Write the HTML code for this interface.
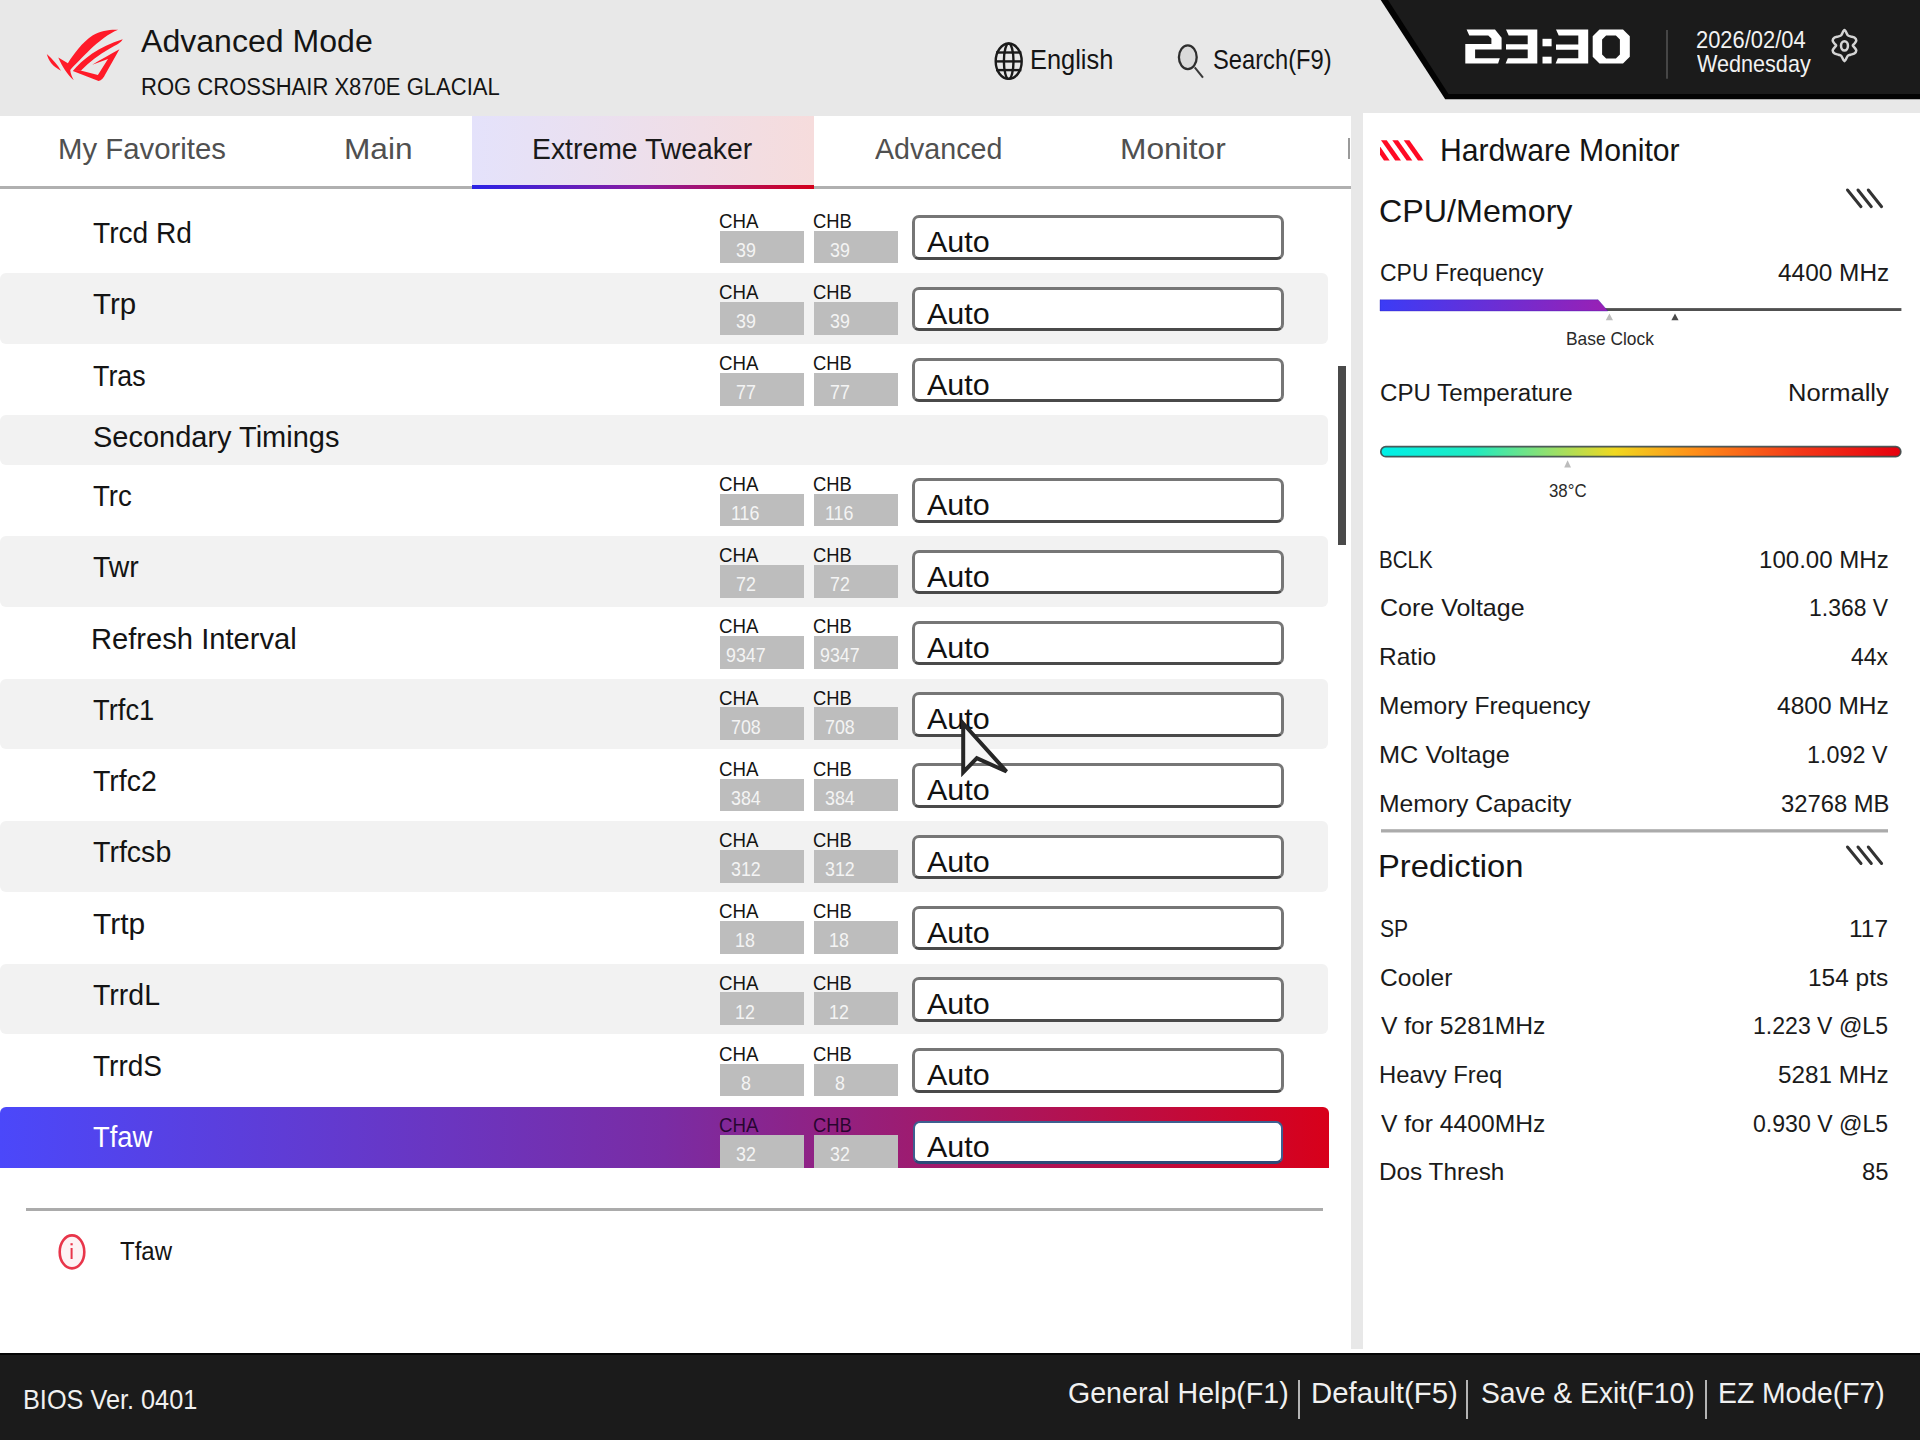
<!DOCTYPE html>
<html><head><meta charset="utf-8">
<style>
html,body{margin:0;padding:0}
body{width:1920px;height:1440px;overflow:hidden;position:relative;background:#e8e8e8;font-family:"Liberation Sans",sans-serif}
.a{position:absolute}
.t{position:absolute;white-space:pre;transform-origin:0 0;font-family:"Liberation Sans",sans-serif}
.rbg{position:absolute;left:0;width:1328px;background:#f2f2f2;border-radius:6px}
.hl{position:absolute;left:0;width:1329px;background:linear-gradient(90deg,#4b48fa 0%,#7a2ca4 50%,#d8001a 100%);border-radius:6px 6px 0 0}
.gb{position:absolute;width:83.5px;background:#bdbdbd}
.ib{position:absolute;left:911.5px;width:372.9px;height:44.7px;box-sizing:border-box;border:3px solid #767676;border-bottom:3.3px solid #4a4a4a;border-radius:7px;background:#fff}
.ibh{position:absolute;left:912.5px;width:370.5px;height:43.5px;box-sizing:border-box;border:2px solid #3d5f90;border-bottom:3px solid #2c4a78;border-radius:7px;background:#fff}
</style></head><body>
<!-- panels -->
<div class="a" style="left:0;top:115.5px;width:1350.5px;height:1233.5px;background:#fff"></div>
<div class="a" style="left:1363px;top:113.3px;width:557px;height:1235.7px;background:#fff"></div>
<div class="a" style="left:0;top:1349px;width:1920px;height:4px;background:#fff"></div>
<!-- footer -->
<div class="a" style="left:0;top:1352.5px;width:1920px;height:87.5px;background:#1b1b1b;border-top:2.5px solid #050505;box-sizing:border-box"></div>
<div class="a" style="left:1297.5px;top:1380.4px;width:2px;height:38.6px;background:#b4b4b4"></div>
<div class="a" style="left:1466.2px;top:1380.4px;width:2px;height:38.6px;background:#b4b4b4"></div>
<div class="a" style="left:1704.5px;top:1380.4px;width:2px;height:38.6px;background:#b4b4b4"></div>
<!-- clock panel -->
<svg class="a" style="left:0;top:0" width="1920" height="110" viewBox="0 0 1920 110">
<polygon points="1380.7,0 1920,0 1920,99.3 1445.2,99.3" fill="#030303"/>
<polygon points="1388,0 1920,0 1920,94 1448.5,94" fill="#1b1b1b"/>
<line x1="1667" y1="30" x2="1667" y2="78.8" stroke="#464646" stroke-width="2"/>
<g fill="#fff">
<polygon points="1466.6,29.5 1495,29.5 1501.6,37.7 1501.6,49.4 1475.1,49.4 1475.1,58.3 1499.8,58.3 1498.1,63.5 1465.3,63.5 1465.3,44.1 1491.4,44.1 1491.4,38.6 1488.3,35.6 1469.3,35.6"/>
<polygon points="1506,29.5 1537.3,29.5 1537.3,63.5 1505.6,63.5 1507.8,58.3 1527.7,58.3 1527.7,49.5 1506,49.5 1506,44.2 1527.7,44.2 1527.7,35.6 1508.7,35.6"/>
<rect x="1542.5" y="38.8" width="9.1" height="7.5"/>
<rect x="1542.5" y="56.7" width="9.1" height="6.8"/>
<polygon points="1556,29.5 1588.2,29.5 1588.2,63.5 1555.6,63.5 1557.8,58.2 1578.3,58.2 1578.3,49.7 1556,49.7 1556,44.5 1578.3,44.5 1578.3,35.5 1558.7,35.5"/>
<path fill-rule="evenodd" d="M1599.5,29.5 L1623,29.5 L1629.8,36.3 L1629.8,56.7 L1623,63.5 L1599.5,63.5 L1592.7,56.7 L1592.7,36.3 Z M1606.1,35.4 L1615.9,35.4 L1619.9,39.4 L1619.9,54.6 L1615.9,58.6 L1606.1,58.6 L1602.1,54.6 L1602.1,39.4 Z"/>
</g>
<!-- gear -->
<g transform="translate(1820,20) scale(0.034722)" fill="none" stroke="#d4d4d4" stroke-width="72" stroke-linejoin="round">
<path d="M705,285 C737,285 772,409 800,440 C828,471 843,459 875,470 C907,481 962,485 990,505 C1018,525 1045,561 1045,590 C1045,619 1007,656 990,680 C973,704 945,717 945,735 C945,753 973,766 990,790 C1007,814 1045,851 1045,880 C1045,909 1018,945 990,965 C962,985 907,989 875,1000 C843,1011 828,999 800,1030 C772,1061 737,1185 705,1185 C673,1185 638,1061 610,1030 C582,999 567,1011 535,1000 C503,989 448,985 420,965 C392,945 365,909 365,880 C365,851 403,814 420,790 C437,766 465,753 465,735 C465,717 437,704 420,680 C403,656 365,619 365,590 C365,561 392,525 420,505 C448,485 503,481 535,470 C567,459 582,471 610,440 C638,409 673,285 705,285 Z"/>
<ellipse cx="705" cy="745" rx="100" ry="135"/>
</g>
<!-- globe -->
<g fill="none" stroke="#1a1a1a" stroke-width="2.4">
<ellipse cx="1008.7" cy="61.2" rx="13" ry="17.7"/>
<ellipse cx="1008.7" cy="61.2" rx="4.8" ry="17.7"/>
<line x1="996" y1="52.5" x2="1021.4" y2="52.5"/>
<line x1="995.7" y1="61.4" x2="1021.7" y2="61.4"/>
<line x1="996" y1="70.1" x2="1021.4" y2="70.1"/>
</g>
<!-- search -->
<ellipse cx="1187.8" cy="57.25" rx="8.9" ry="11.8" fill="#dadada" stroke="#2e2e2e" stroke-width="2.3"/>
<line x1="1194.7" y1="67.3" x2="1203" y2="77.7" stroke="#3a3a3a" stroke-width="2"/>
<!-- ROG logo -->
<g transform="translate(40,24) scale(0.046875)" fill="#ff1a28">
<path d="M145,640 C185,790 270,910 448,995 C380,880 280,760 145,640 Z"/>
<path d="M390,715 L595,835 C720,640 900,390 1120,245 C1300,145 1500,115 1665,125 C1470,205 1270,360 1070,545 C900,710 750,870 645,980 C650,1060 690,1140 720,1200 C580,1080 470,900 390,715 Z"/>
<path d="M700,1005 C900,760 1250,480 1765,325 C1730,400 1620,450 1490,520 C1260,650 1060,800 870,995 Z"/>
<path fill-rule="evenodd" d="M700,1005 L1250,1218 C1310,1205 1360,1150 1400,1060 L1695,540 C1500,650 1300,760 1115,870 L1450,745 L1235,1088 L865,990 Z"/>
</g>
</svg>
<!-- tabs -->
<div class="a" style="left:472px;top:115.5px;width:342px;height:70px;background:linear-gradient(90deg,#e4e2fb,#f6dcdc)"></div>
<div class="a" style="left:0;top:185.5px;width:1350.5px;height:3px;background:#b0b0b0"></div>
<div class="a" style="left:472px;top:184.7px;width:342px;height:4px;background:linear-gradient(90deg,#2a22e6,#8a1ca0 50%,#d4001a)"></div>
<div class="a" style="left:1347.8px;top:138px;width:2.2px;height:20.7px;background:#9a9a9a"></div>
<!-- rows -->
<div class="gb" style="left:720.2px;top:230.70px;height:32.80px"></div>
<div class="gb" style="left:814.2px;top:230.70px;height:32.80px"></div>
<div class="ib" style="top:215.30px"></div>
<div class="rbg" style="top:273.20px;height:70.75px"></div>
<div class="gb" style="left:720.2px;top:301.95px;height:32.80px"></div>
<div class="gb" style="left:814.2px;top:301.95px;height:32.80px"></div>
<div class="ib" style="top:286.55px"></div>
<div class="gb" style="left:720.2px;top:373.20px;height:32.80px"></div>
<div class="gb" style="left:814.2px;top:373.20px;height:32.80px"></div>
<div class="ib" style="top:357.80px"></div>
<div class="rbg" style="top:415.45px;height:49.2px"></div>
<div class="gb" style="left:720.2px;top:493.65px;height:32.80px"></div>
<div class="gb" style="left:814.2px;top:493.65px;height:32.80px"></div>
<div class="ib" style="top:478.25px"></div>
<div class="rbg" style="top:536.15px;height:70.75px"></div>
<div class="gb" style="left:720.2px;top:564.90px;height:32.80px"></div>
<div class="gb" style="left:814.2px;top:564.90px;height:32.80px"></div>
<div class="ib" style="top:549.50px"></div>
<div class="gb" style="left:720.2px;top:636.15px;height:32.80px"></div>
<div class="gb" style="left:814.2px;top:636.15px;height:32.80px"></div>
<div class="ib" style="top:620.75px"></div>
<div class="rbg" style="top:678.65px;height:70.75px"></div>
<div class="gb" style="left:720.2px;top:707.40px;height:32.80px"></div>
<div class="gb" style="left:814.2px;top:707.40px;height:32.80px"></div>
<div class="ib" style="top:692.00px"></div>
<div class="gb" style="left:720.2px;top:778.65px;height:32.80px"></div>
<div class="gb" style="left:814.2px;top:778.65px;height:32.80px"></div>
<div class="ib" style="top:763.25px"></div>
<div class="rbg" style="top:821.15px;height:70.75px"></div>
<div class="gb" style="left:720.2px;top:849.90px;height:32.80px"></div>
<div class="gb" style="left:814.2px;top:849.90px;height:32.80px"></div>
<div class="ib" style="top:834.50px"></div>
<div class="gb" style="left:720.2px;top:921.15px;height:32.80px"></div>
<div class="gb" style="left:814.2px;top:921.15px;height:32.80px"></div>
<div class="ib" style="top:905.75px"></div>
<div class="rbg" style="top:963.65px;height:70.75px"></div>
<div class="gb" style="left:720.2px;top:992.40px;height:32.80px"></div>
<div class="gb" style="left:814.2px;top:992.40px;height:32.80px"></div>
<div class="ib" style="top:977.00px"></div>
<div class="gb" style="left:720.2px;top:1063.65px;height:32.80px"></div>
<div class="gb" style="left:814.2px;top:1063.65px;height:32.80px"></div>
<div class="ib" style="top:1048.25px"></div>
<div class="hl" style="top:1106.60px;height:61.40px"></div>
<div class="gb" style="left:720.2px;top:1134.90px;height:33.10px"></div>
<div class="gb" style="left:814.2px;top:1134.90px;height:33.10px"></div>
<div class="ibh" style="top:1120.75px"></div>
<!-- scrollbar -->
<div class="a" style="left:1337.5px;top:365.8px;width:8.7px;height:179.2px;background:#4a4a4a"></div>
<!-- help -->
<div class="a" style="left:26px;top:1208.3px;width:1297px;height:2.8px;background:#ababab"></div>
<svg class="a" style="left:0;top:1200px" width="120" height="100" viewBox="0 1200 120 100">
<ellipse cx="72" cy="1251.9" rx="12.3" ry="16.5" fill="#fdf2f4" stroke="#e8354a" stroke-width="2.6"/>
<line x1="71.6" y1="1243.2" x2="71.6" y2="1245.3" stroke="#e8354a" stroke-width="2.2"/>
<line x1="71.6" y1="1248" x2="71.6" y2="1259" stroke="#e8354a" stroke-width="2"/>
</svg>
<!-- right panel graphics -->
<svg class="a" style="left:1363px;top:113px" width="557" height="800" viewBox="1363 113 557 800">
<defs>
<clipPath id="cl"><rect x="1380" y="130" width="60" height="40"/></clipPath>
<linearGradient id="fq" x1="0" x2="1"><stop offset="0" stop-color="#3b3cf6"/><stop offset="1" stop-color="#9a20b4"/></linearGradient>
<linearGradient id="tp" x1="0" x2="1"><stop offset="0" stop-color="#00f0e8"/><stop offset="0.18" stop-color="#20eac0"/><stop offset="0.32" stop-color="#90e070"/><stop offset="0.45" stop-color="#f0d820"/><stop offset="0.6" stop-color="#ff9018"/><stop offset="0.8" stop-color="#f43a18"/><stop offset="1" stop-color="#e6000e"/></linearGradient>
</defs>
<g clip-path="url(#cl)" fill="#ff0a24">
<polygon points="1369.75,140.2 1375.5,140.2 1389.7,160.4 1384,160.4"/>
<polygon points="1381,140.2 1386.7,140.2 1401,160.4 1395.2,160.4"/>
<polygon points="1392.3,140.2 1398,140.2 1412.3,160.4 1406.6,160.4"/>
<polygon points="1403.7,140.2 1409.4,140.2 1423.7,160.4 1418,160.4"/>
</g>
<g stroke="#333" stroke-width="3" stroke-linecap="round">
<line x1="1847.5" y1="190" x2="1861" y2="206.7"/><line x1="1858" y1="190" x2="1871.3" y2="206.7"/><line x1="1868.3" y1="190" x2="1881.6" y2="206.7"/>
<line x1="1847.5" y1="847" x2="1861" y2="863.5"/><line x1="1858" y1="847" x2="1871.3" y2="863.5"/><line x1="1868.3" y1="847" x2="1881.6" y2="863.5"/>
</g>
<rect x="1380" y="308.1" width="521.4" height="2.9" fill="#505050"/>
<polygon points="1380,299.7 1598.1,299.7 1607.8,311 1380,311" fill="url(#fq)" stroke="#2a1cb0" stroke-opacity="0.35" stroke-width="1"/>
<polygon points="1609.4,313.5 1613,320.3 1605.8,320.3" fill="#bcbcbc"/>
<polygon points="1675,313.5 1678.6,320.3 1671.4,320.3" fill="#4a4a4a"/>
<rect x="1380.8" y="446.7" width="520" height="10" rx="5" fill="url(#tp)" stroke="#3c4a4a" stroke-width="1.7" stroke-opacity="0.9"/>
<polygon points="1567.6,460.2 1571,467.4 1564.2,467.4" fill="#bcbcbc"/>
<rect x="1381" y="829.2" width="507" height="3.3" fill="#ababab"/>
</svg>
<div class="t" style="left:141.20px;top:26.00px;font-size:31.88px;line-height:31.88px;color:#141414;transform:scaleX(1.0060)">Advanced Mode</div>
<div class="t" style="left:141.44px;top:76.00px;font-size:23.04px;line-height:23.04px;color:#141414;transform:scaleX(0.9566)">ROG CROSSHAIR X870E GLACIAL</div>
<div class="t" style="left:1029.57px;top:45.00px;font-size:28.55px;line-height:28.55px;color:#141414;transform:scaleX(0.8894)">English</div>
<div class="t" style="left:1213.33px;top:45.00px;font-size:28.55px;line-height:28.55px;color:#141414;transform:scaleX(0.8309)">Search(F9)</div>
<div class="t" style="left:1696.30px;top:28.00px;font-size:24.06px;line-height:24.06px;color:#f2f2f2;transform:scaleX(0.9108)">2026/02/04</div>
<div class="t" style="left:1697.40px;top:53.00px;font-size:23.19px;line-height:23.19px;color:#f2f2f2;transform:scaleX(0.9317)">Wednesday</div>
<div class="t" style="left:58.25px;top:134.00px;font-size:30.14px;line-height:30.14px;color:#505050;transform:scaleX(0.9736)">My Favorites</div>
<div class="t" style="left:344.47px;top:134.00px;font-size:30.14px;line-height:30.14px;color:#505050;transform:scaleX(1.0510)">Main</div>
<div class="t" style="left:532.43px;top:134.00px;font-size:30.14px;line-height:30.14px;color:#1a1a1a;transform:scaleX(0.9420)">Extreme Tweaker</div>
<div class="t" style="left:874.80px;top:134.00px;font-size:30.14px;line-height:30.14px;color:#505050;transform:scaleX(0.9506)">Advanced</div>
<div class="t" style="left:1119.66px;top:134.00px;font-size:30.14px;line-height:30.14px;color:#505050;transform:scaleX(1.0531)">Monitor</div>
<div class="t" style="left:92.84px;top:218.00px;font-size:30.14px;line-height:30.14px;color:#141414;transform:scaleX(0.9340)">Trcd Rd</div>
<div class="t" style="left:719.47px;top:211.00px;font-size:20.87px;line-height:20.87px;color:#141414;transform:scaleX(0.8960)">CHA</div>
<div class="t" style="left:813.28px;top:211.00px;font-size:20.87px;line-height:20.87px;color:#141414;transform:scaleX(0.8800)">CHB</div>
<div class="t" style="left:735.77px;top:240.00px;font-size:20.29px;line-height:20.29px;color:#f4f4f4;transform:scaleX(0.8800)">39</div>
<div class="t" style="left:829.67px;top:240.00px;font-size:20.29px;line-height:20.29px;color:#f4f4f4;transform:scaleX(0.8800)">39</div>
<div class="t" style="left:926.50px;top:227.00px;font-size:29.28px;line-height:29.28px;color:#111;transform:scaleX(1.0420)">Auto</div>
<div class="t" style="left:92.81px;top:289.00px;font-size:30.14px;line-height:30.14px;color:#141414;transform:scaleX(0.9774)">Trp</div>
<div class="t" style="left:719.47px;top:282.00px;font-size:20.87px;line-height:20.87px;color:#141414;transform:scaleX(0.8960)">CHA</div>
<div class="t" style="left:813.28px;top:282.00px;font-size:20.87px;line-height:20.87px;color:#141414;transform:scaleX(0.8800)">CHB</div>
<div class="t" style="left:735.77px;top:311.00px;font-size:20.29px;line-height:20.29px;color:#f4f4f4;transform:scaleX(0.8800)">39</div>
<div class="t" style="left:829.67px;top:311.00px;font-size:20.29px;line-height:20.29px;color:#f4f4f4;transform:scaleX(0.8800)">39</div>
<div class="t" style="left:926.50px;top:299.00px;font-size:29.28px;line-height:29.28px;color:#111;transform:scaleX(1.0420)">Auto</div>
<div class="t" style="left:92.86px;top:361.00px;font-size:30.14px;line-height:30.14px;color:#141414;transform:scaleX(0.8902)">Tras</div>
<div class="t" style="left:719.47px;top:353.00px;font-size:20.87px;line-height:20.87px;color:#141414;transform:scaleX(0.8960)">CHA</div>
<div class="t" style="left:813.28px;top:353.00px;font-size:20.87px;line-height:20.87px;color:#141414;transform:scaleX(0.8800)">CHB</div>
<div class="t" style="left:735.64px;top:382.00px;font-size:20.29px;line-height:20.29px;color:#f4f4f4;transform:scaleX(0.8800)">77</div>
<div class="t" style="left:829.54px;top:382.00px;font-size:20.29px;line-height:20.29px;color:#f4f4f4;transform:scaleX(0.8800)">77</div>
<div class="t" style="left:926.50px;top:370.00px;font-size:29.28px;line-height:29.28px;color:#111;transform:scaleX(1.0420)">Auto</div>
<div class="t" style="left:93.45px;top:422.00px;font-size:29.42px;line-height:29.42px;color:#141414;transform:scaleX(0.9854)">Secondary Timings</div>
<div class="t" style="left:92.85px;top:481.00px;font-size:30.14px;line-height:30.14px;color:#141414;transform:scaleX(0.9160)">Trc</div>
<div class="t" style="left:719.47px;top:474.00px;font-size:20.87px;line-height:20.87px;color:#141414;transform:scaleX(0.8960)">CHA</div>
<div class="t" style="left:813.28px;top:474.00px;font-size:20.87px;line-height:20.87px;color:#141414;transform:scaleX(0.8800)">CHB</div>
<div class="t" style="left:731.07px;top:503.00px;font-size:20.29px;line-height:20.29px;color:#f4f4f4;transform:scaleX(0.8800)">116</div>
<div class="t" style="left:824.97px;top:503.00px;font-size:20.29px;line-height:20.29px;color:#f4f4f4;transform:scaleX(0.8800)">116</div>
<div class="t" style="left:926.50px;top:490.00px;font-size:29.28px;line-height:29.28px;color:#111;transform:scaleX(1.0420)">Auto</div>
<div class="t" style="left:92.83px;top:552.00px;font-size:30.14px;line-height:30.14px;color:#141414;transform:scaleX(0.9440)">Twr</div>
<div class="t" style="left:719.47px;top:545.00px;font-size:20.87px;line-height:20.87px;color:#141414;transform:scaleX(0.8960)">CHA</div>
<div class="t" style="left:813.28px;top:545.00px;font-size:20.87px;line-height:20.87px;color:#141414;transform:scaleX(0.8800)">CHB</div>
<div class="t" style="left:735.64px;top:574.00px;font-size:20.29px;line-height:20.29px;color:#f4f4f4;transform:scaleX(0.8800)">72</div>
<div class="t" style="left:829.54px;top:574.00px;font-size:20.29px;line-height:20.29px;color:#f4f4f4;transform:scaleX(0.8800)">72</div>
<div class="t" style="left:926.50px;top:562.00px;font-size:29.28px;line-height:29.28px;color:#111;transform:scaleX(1.0420)">Auto</div>
<div class="t" style="left:91.07px;top:624.00px;font-size:30.14px;line-height:30.14px;color:#141414;transform:scaleX(0.9674)">Refresh Interval</div>
<div class="t" style="left:719.47px;top:616.00px;font-size:20.87px;line-height:20.87px;color:#141414;transform:scaleX(0.8960)">CHA</div>
<div class="t" style="left:813.28px;top:616.00px;font-size:20.87px;line-height:20.87px;color:#141414;transform:scaleX(0.8800)">CHB</div>
<div class="t" style="left:725.75px;top:645.00px;font-size:20.29px;line-height:20.29px;color:#f4f4f4;transform:scaleX(0.8800)">9347</div>
<div class="t" style="left:819.65px;top:645.00px;font-size:20.29px;line-height:20.29px;color:#f4f4f4;transform:scaleX(0.8800)">9347</div>
<div class="t" style="left:926.50px;top:633.00px;font-size:29.28px;line-height:29.28px;color:#111;transform:scaleX(1.0420)">Auto</div>
<div class="t" style="left:92.85px;top:695.00px;font-size:30.14px;line-height:30.14px;color:#141414;transform:scaleX(0.9077)">Trfc1</div>
<div class="t" style="left:719.47px;top:688.00px;font-size:20.87px;line-height:20.87px;color:#141414;transform:scaleX(0.8960)">CHA</div>
<div class="t" style="left:813.28px;top:688.00px;font-size:20.87px;line-height:20.87px;color:#141414;transform:scaleX(0.8800)">CHB</div>
<div class="t" style="left:730.63px;top:717.00px;font-size:20.29px;line-height:20.29px;color:#f4f4f4;transform:scaleX(0.8800)">708</div>
<div class="t" style="left:824.53px;top:717.00px;font-size:20.29px;line-height:20.29px;color:#f4f4f4;transform:scaleX(0.8800)">708</div>
<div class="t" style="left:926.50px;top:704.00px;font-size:29.28px;line-height:29.28px;color:#111;transform:scaleX(1.0420)">Auto</div>
<div class="t" style="left:92.83px;top:766.00px;font-size:30.14px;line-height:30.14px;color:#141414;transform:scaleX(0.9458)">Trfc2</div>
<div class="t" style="left:719.47px;top:759.00px;font-size:20.87px;line-height:20.87px;color:#141414;transform:scaleX(0.8960)">CHA</div>
<div class="t" style="left:813.28px;top:759.00px;font-size:20.87px;line-height:20.87px;color:#141414;transform:scaleX(0.8800)">CHB</div>
<div class="t" style="left:730.63px;top:788.00px;font-size:20.29px;line-height:20.29px;color:#f4f4f4;transform:scaleX(0.8800)">384</div>
<div class="t" style="left:824.53px;top:788.00px;font-size:20.29px;line-height:20.29px;color:#f4f4f4;transform:scaleX(0.8800)">384</div>
<div class="t" style="left:926.50px;top:775.00px;font-size:29.28px;line-height:29.28px;color:#111;transform:scaleX(1.0420)">Auto</div>
<div class="t" style="left:92.83px;top:837.00px;font-size:30.14px;line-height:30.14px;color:#141414;transform:scaleX(0.9483)">Trfcsb</div>
<div class="t" style="left:719.47px;top:830.00px;font-size:20.87px;line-height:20.87px;color:#141414;transform:scaleX(0.8960)">CHA</div>
<div class="t" style="left:813.28px;top:830.00px;font-size:20.87px;line-height:20.87px;color:#141414;transform:scaleX(0.8800)">CHB</div>
<div class="t" style="left:730.80px;top:859.00px;font-size:20.29px;line-height:20.29px;color:#f4f4f4;transform:scaleX(0.8800)">312</div>
<div class="t" style="left:824.70px;top:859.00px;font-size:20.29px;line-height:20.29px;color:#f4f4f4;transform:scaleX(0.8800)">312</div>
<div class="t" style="left:926.50px;top:847.00px;font-size:29.28px;line-height:29.28px;color:#111;transform:scaleX(1.0420)">Auto</div>
<div class="t" style="left:92.80px;top:909.00px;font-size:30.14px;line-height:30.14px;color:#141414;transform:scaleX(0.9935)">Trtp</div>
<div class="t" style="left:719.47px;top:901.00px;font-size:20.87px;line-height:20.87px;color:#141414;transform:scaleX(0.8960)">CHA</div>
<div class="t" style="left:813.28px;top:901.00px;font-size:20.87px;line-height:20.87px;color:#141414;transform:scaleX(0.8800)">CHB</div>
<div class="t" style="left:735.37px;top:930.00px;font-size:20.29px;line-height:20.29px;color:#f4f4f4;transform:scaleX(0.8800)">18</div>
<div class="t" style="left:829.27px;top:930.00px;font-size:20.29px;line-height:20.29px;color:#f4f4f4;transform:scaleX(0.8800)">18</div>
<div class="t" style="left:926.50px;top:918.00px;font-size:29.28px;line-height:29.28px;color:#111;transform:scaleX(1.0420)">Auto</div>
<div class="t" style="left:92.83px;top:980.00px;font-size:30.14px;line-height:30.14px;color:#141414;transform:scaleX(0.9458)">TrrdL</div>
<div class="t" style="left:719.47px;top:973.00px;font-size:20.87px;line-height:20.87px;color:#141414;transform:scaleX(0.8960)">CHA</div>
<div class="t" style="left:813.28px;top:973.00px;font-size:20.87px;line-height:20.87px;color:#141414;transform:scaleX(0.8800)">CHB</div>
<div class="t" style="left:735.41px;top:1002.00px;font-size:20.29px;line-height:20.29px;color:#f4f4f4;transform:scaleX(0.8800)">12</div>
<div class="t" style="left:829.31px;top:1002.00px;font-size:20.29px;line-height:20.29px;color:#f4f4f4;transform:scaleX(0.8800)">12</div>
<div class="t" style="left:926.50px;top:989.00px;font-size:29.28px;line-height:29.28px;color:#111;transform:scaleX(1.0420)">Auto</div>
<div class="t" style="left:92.84px;top:1051.00px;font-size:30.14px;line-height:30.14px;color:#141414;transform:scaleX(0.9299)">TrrdS</div>
<div class="t" style="left:719.47px;top:1044.00px;font-size:20.87px;line-height:20.87px;color:#141414;transform:scaleX(0.8960)">CHA</div>
<div class="t" style="left:813.28px;top:1044.00px;font-size:20.87px;line-height:20.87px;color:#141414;transform:scaleX(0.8800)">CHB</div>
<div class="t" style="left:740.65px;top:1073.00px;font-size:20.29px;line-height:20.29px;color:#f4f4f4;transform:scaleX(0.8800)">8</div>
<div class="t" style="left:834.55px;top:1073.00px;font-size:20.29px;line-height:20.29px;color:#f4f4f4;transform:scaleX(0.8800)">8</div>
<div class="t" style="left:926.50px;top:1060.00px;font-size:29.28px;line-height:29.28px;color:#111;transform:scaleX(1.0420)">Auto</div>
<div class="t" style="left:92.85px;top:1122.00px;font-size:30.14px;line-height:30.14px;color:#ffffff;transform:scaleX(0.9073)">Tfaw</div>
<div class="t" style="left:719.47px;top:1115.00px;font-size:20.87px;line-height:20.87px;color:rgba(20,0,30,0.85);transform:scaleX(0.8960)">CHA</div>
<div class="t" style="left:813.28px;top:1115.00px;font-size:20.87px;line-height:20.87px;color:rgba(20,0,30,0.85);transform:scaleX(0.8800)">CHB</div>
<div class="t" style="left:735.77px;top:1144.00px;font-size:20.29px;line-height:20.29px;color:#f4f4f4;transform:scaleX(0.8800)">32</div>
<div class="t" style="left:829.67px;top:1144.00px;font-size:20.29px;line-height:20.29px;color:#f4f4f4;transform:scaleX(0.8800)">32</div>
<div class="t" style="left:926.50px;top:1132.00px;font-size:29.28px;line-height:29.28px;color:#111;transform:scaleX(1.0420)">Auto</div>
<div class="t" style="left:119.82px;top:1238.00px;font-size:26.38px;line-height:26.38px;color:#141414;transform:scaleX(0.9100)">Tfaw</div>
<div class="t" style="left:1439.69px;top:136.00px;font-size:30.72px;line-height:30.72px;color:#141414;transform:scaleX(0.9817)">Hardware Monitor</div>
<div class="t" style="left:1379.29px;top:196.00px;font-size:31.16px;line-height:31.16px;color:#141414;transform:scaleX(1.0350)">CPU/Memory</div>
<div class="t" style="left:1379.75px;top:262.00px;font-size:23.62px;line-height:23.62px;color:#1a1a1a;transform:scaleX(0.9732)">CPU Frequency</div>
<div class="t" style="left:1777.71px;top:262.00px;font-size:23.62px;line-height:23.62px;color:#1a1a1a;transform:scaleX(1.0336)">4400 MHz</div>
<div class="t" style="left:1565.61px;top:330.00px;font-size:18.84px;line-height:18.84px;color:#2a2a2a;transform:scaleX(0.9225)">Base Clock</div>
<div class="t" style="left:1379.69px;top:382.00px;font-size:23.62px;line-height:23.62px;color:#1a1a1a;transform:scaleX(1.0225)">CPU Temperature</div>
<div class="t" style="left:1787.65px;top:382.00px;font-size:23.62px;line-height:23.62px;color:#1a1a1a;transform:scaleX(1.0822)">Normally</div>
<div class="t" style="left:1549.31px;top:482.00px;font-size:18.26px;line-height:18.26px;color:#2a2a2a;transform:scaleX(0.9219)">38°C</div>
<div class="t" style="left:1379.36px;top:549.00px;font-size:23.19px;line-height:23.19px;color:#1a1a1a;transform:scaleX(0.8863)">BCLK</div>
<div class="t" style="left:1759.19px;top:549.00px;font-size:23.19px;line-height:23.19px;color:#1a1a1a;transform:scaleX(1.0381)">100.00 MHz</div>
<div class="t" style="left:1379.75px;top:597.00px;font-size:23.19px;line-height:23.19px;color:#1a1a1a;transform:scaleX(1.0784)">Core Voltage</div>
<div class="t" style="left:1808.88px;top:597.00px;font-size:23.19px;line-height:23.19px;color:#1a1a1a;transform:scaleX(0.9891)">1.368 V</div>
<div class="t" style="left:1379.04px;top:646.00px;font-size:23.19px;line-height:23.19px;color:#1a1a1a;transform:scaleX(1.0570)">Ratio</div>
<div class="t" style="left:1851.04px;top:646.00px;font-size:23.19px;line-height:23.19px;color:#1a1a1a;transform:scaleX(0.9921)">44x</div>
<div class="t" style="left:1379.04px;top:695.00px;font-size:23.19px;line-height:23.19px;color:#1a1a1a;transform:scaleX(1.0582)">Memory Frequency</div>
<div class="t" style="left:1777.21px;top:695.00px;font-size:23.19px;line-height:23.19px;color:#1a1a1a;transform:scaleX(1.0578)">4800 MHz</div>
<div class="t" style="left:1378.98px;top:744.00px;font-size:23.19px;line-height:23.19px;color:#1a1a1a;transform:scaleX(1.0913)">MC Voltage</div>
<div class="t" style="left:1807.45px;top:744.00px;font-size:23.19px;line-height:23.19px;color:#1a1a1a;transform:scaleX(1.0070)">1.092 V</div>
<div class="t" style="left:1379.02px;top:793.00px;font-size:23.19px;line-height:23.19px;color:#1a1a1a;transform:scaleX(1.0670)">Memory Capacity</div>
<div class="t" style="left:1780.67px;top:793.00px;font-size:23.19px;line-height:23.19px;color:#1a1a1a;transform:scaleX(1.0261)">32768 MB</div>
<div class="t" style="left:1378.38px;top:851.00px;font-size:31.59px;line-height:31.59px;color:#141414;transform:scaleX(1.0358)">Prediction</div>
<div class="t" style="left:1380.25px;top:918.00px;font-size:23.19px;line-height:23.19px;color:#1a1a1a;transform:scaleX(0.9099)">SP</div>
<div class="t" style="left:1849.26px;top:918.00px;font-size:23.19px;line-height:23.19px;color:#1a1a1a;transform:scaleX(1.0568)">117</div>
<div class="t" style="left:1379.97px;top:967.00px;font-size:23.19px;line-height:23.19px;color:#1a1a1a;transform:scaleX(1.0591)">Cooler</div>
<div class="t" style="left:1807.87px;top:967.00px;font-size:23.19px;line-height:23.19px;color:#1a1a1a;transform:scaleX(1.0542)">154 pts</div>
<div class="t" style="left:1381.20px;top:1015.00px;font-size:23.19px;line-height:23.19px;color:#1a1a1a;transform:scaleX(1.0624)">V for 5281MHz</div>
<div class="t" style="left:1753.17px;top:1015.00px;font-size:23.19px;line-height:23.19px;color:#1a1a1a;transform:scaleX(0.9946)">1.223 V @L5</div>
<div class="t" style="left:1379.29px;top:1064.00px;font-size:23.19px;line-height:23.19px;color:#1a1a1a;transform:scaleX(1.0277)">Heavy Freq</div>
<div class="t" style="left:1777.73px;top:1064.00px;font-size:23.19px;line-height:23.19px;color:#1a1a1a;transform:scaleX(1.0462)">5281 MHz</div>
<div class="t" style="left:1381.20px;top:1113.00px;font-size:23.19px;line-height:23.19px;color:#1a1a1a;transform:scaleX(1.0624)">V for 4400MHz</div>
<div class="t" style="left:1753.09px;top:1113.00px;font-size:23.19px;line-height:23.19px;color:#1a1a1a;transform:scaleX(0.9952)">0.930 V @L5</div>
<div class="t" style="left:1379.25px;top:1161.00px;font-size:23.19px;line-height:23.19px;color:#1a1a1a;transform:scaleX(1.0500)">Dos Thresh</div>
<div class="t" style="left:1861.65px;top:1161.00px;font-size:23.19px;line-height:23.19px;color:#1a1a1a;transform:scaleX(1.0288)">85</div>
<div class="t" style="left:22.78px;top:1386.00px;font-size:27.25px;line-height:27.25px;color:#f0f0f0;transform:scaleX(0.9279)">BIOS Ver. 0401</div>
<div class="t" style="left:1067.97px;top:1378.00px;font-size:29.86px;line-height:29.86px;color:#f0f0f0;transform:scaleX(0.9569)">General Help(F1)</div>
<div class="t" style="left:1310.75px;top:1378.00px;font-size:29.86px;line-height:29.86px;color:#f0f0f0;transform:scaleX(0.9828)">Default(F5)</div>
<div class="t" style="left:1481.03px;top:1378.00px;font-size:29.86px;line-height:29.86px;color:#f0f0f0;transform:scaleX(0.9471)">Save &amp; Exit(F10)</div>
<div class="t" style="left:1718.34px;top:1378.00px;font-size:29.86px;line-height:29.86px;color:#f0f0f0;transform:scaleX(0.9480)">EZ Mode(F7)</div>
<!-- cursor -->
<svg class="a" style="left:940px;top:700px" width="90" height="90" viewBox="940 700 90 90">
<polygon points="963.2,723.5 1006.5,771.5 976.8,758.2 963.2,772.2" fill="#f6f6f6" stroke="#262626" stroke-width="4" stroke-linejoin="miter" stroke-miterlimit="3"/>
</svg>
</body></html>
